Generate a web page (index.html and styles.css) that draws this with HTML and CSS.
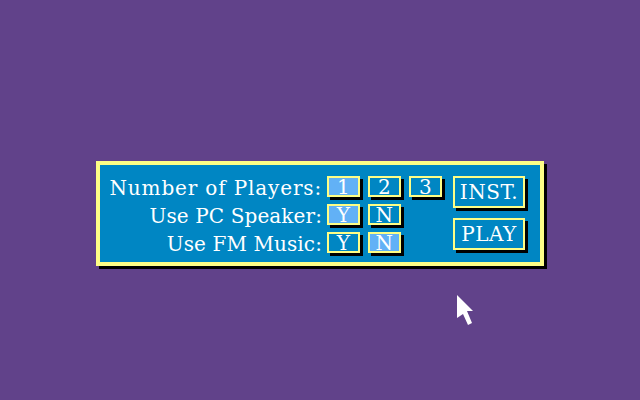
FILE: index.html
```html
<!DOCTYPE html>
<html lang="en">
<head>
  <meta charset="UTF-8" />
  <title>Game Setup</title>
  <link rel="stylesheet" href="styles.css">
</head>
<body>
  <div class="screen">
    <div class="panel">
      <div class="options">
        <div class="row">
          <span class="label wide">Number of Players:</span>
          <div class="choices">
            <button class="opt on">1</button>
            <button class="opt">2</button>
            <button class="opt">3</button>
          </div>
        </div>
        <div class="row">
          <span class="label">Use PC Speaker:</span>
          <div class="choices">
            <button class="opt on">Y</button>
            <button class="opt">N</button>
          </div>
        </div>
        <div class="row">
          <span class="label">Use FM Music:</span>
          <div class="choices">
            <button class="opt">Y</button>
            <button class="opt on">N</button>
          </div>
        </div>
      </div>
      <div class="actions">
        <button class="big">INST.</button>
        <button class="big">PLAY</button>
      </div>
    </div>

    <svg class="cursor" width="17" height="31" viewBox="0 0 17 31">
      <polygon points="0,0 16,16 10,16 15,28 11,30 6,19 0,23" fill="#fff"/>
    </svg>
  </div>
</body>
</html>
```

FILE: styles.css
```css
body {
  margin: 0;
  background: #61428a;
}

.screen {
  position: relative;
  width: 640px;
  height: 400px;
  box-sizing: border-box;
  padding: 161px 0 0 96px;
  background: #61428a;
  font-family: 'DejaVu Serif', 'Liberation Serif', serif;
  font-size: 20px;
  letter-spacing: 0.1px;
  color: #fff;
}

.panel {
  display: flex;
  width: 448px;
  height: 105px;
  box-sizing: border-box;
  padding: 11px 15px 9px 0;
  background: #0086c3;
  border: 4px solid #fefe86;
  box-shadow: 3px 3px 0 #000;
}

.options {
  display: flex;
  flex-direction: column;
  gap: 7px;
}

.row {
  display: grid;
  grid-template-columns: 225px auto;
  column-gap: 2px;
  height: 21px;
}

.label {
  text-align: right;
  line-height: 24px;
  padding-right: 3px;
  white-space: nowrap;
}

.label.wide {
  letter-spacing: 0.85px;
}

.choices {
  display: flex;
  gap: 8px;
}

button {
  font: inherit;
  letter-spacing: 0.5px;
  color: #fff;
  padding: 0;
  margin: 0;
  box-sizing: border-box;
  border: 2px solid #fefe86;
  background: #0086c3;
  box-shadow: 3px 3px 0 #000;
  cursor: pointer;
}

.opt {
  width: 33px;
  height: 21px;
  line-height: 19px;
}

.opt.on {
  background: #62b1f6;
}

.actions {
  display: flex;
  flex-direction: column;
  gap: 10px;
  margin-left: 11px;
}

.big {
  width: 72px;
  height: 32px;
  line-height: 29px;
}

.cursor {
  position: absolute;
  left: 457px;
  top: 295px;
}
```
